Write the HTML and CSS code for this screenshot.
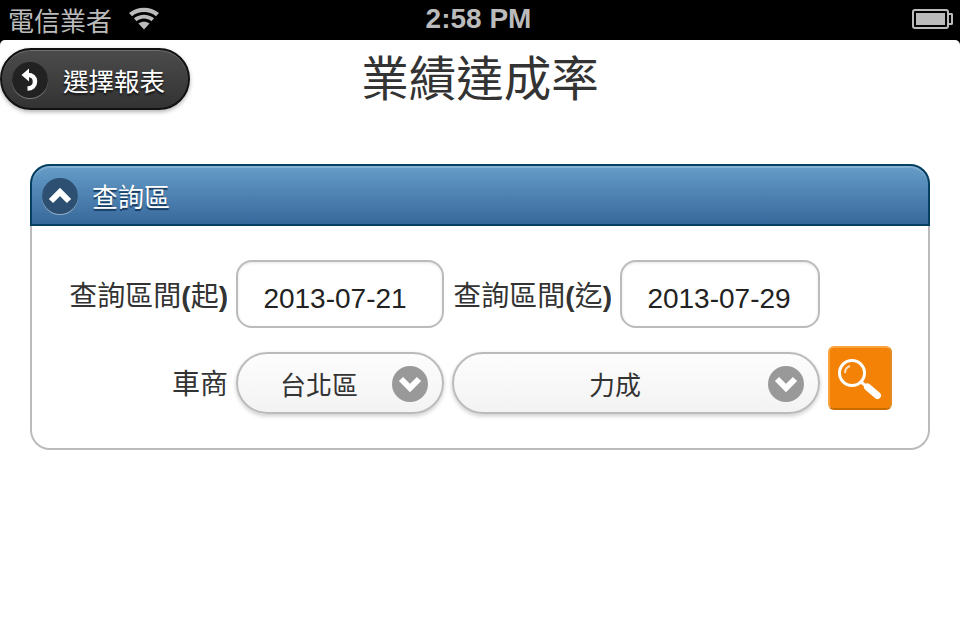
FILE: index.html
```html
<!DOCTYPE html>
<html lang="zh-Hant">
<head>
  <meta charset="utf8"/>
  <meta name="viewport" content="width=device-width"/>
  <title>業績達成率</title>
  <link rel="stylesheet" href="styles.css">
</head>
<body>
  <div class="statusbar">
    <div class="carrier">
      <span>電信業者</span>
      <svg class="wifi" width="32" height="24" viewBox="0 0 32 24">
        <path d="M16 23.500l-5.500-6c3.200-2.500 7.800-2.500 11 0z" fill="#bbb"/>
        <path d="M8.500 15.200c4.400-3.500 10.600-3.500 15 0l2.600-2.900c-5.900-4.700-14.300-4.700-20.200 0z" fill="#bbb"/>
        <path d="M4 10.300c7-5.600 17-5.600 24 0l3-3.300C22.200 0 9.800 0 1 7z" fill="#bbb"/>
      </svg>
    </div>
    <div class="clock">2:58 PM</div>
    <div class="status-right"><div class="battery"><div class="battery-level"></div></div></div>
  </div>

  <div class="page">
    <div class="header">
      <a class="btn-back">
        <span class="icon-disc">
          <svg width="22" height="26" viewBox="0 0 22 26">
            <path d="M10 1.500L2.500 8 10 14.500z" fill="#fff"/>
            <path d="M8 8h1c4 0 7 2.500 7 6.500s-3 7-7.500 7" fill="none" stroke="#fff" stroke-width="4.500"/>
          </svg>
        </span>
        <span class="btn-back-text">選擇報表</span>
      </a>
      <h1>業績達成率</h1>
    </div>

    <div class="panel">
      <div class="panel-head">
        <span class="icon-disc icon-disc-blue">
          <svg width="24" height="16" viewBox="0 0 24 16"><path d="M3 13l9-9 9 9" fill="none" stroke="#fff" stroke-width="6"/></svg>
        </span>
        <span>查詢區</span>
      </div>
      <div class="panel-body">
        <div class="row row-dates">
          <label class="lbl">查詢區間<b>(</b>起<b>)</b></label>
          <div class="field field-short">2013-07-21</div>
          <label class="lbl lbl-second">查詢區間<b>(</b>迄<b>)</b></label>
          <div class="field field-end">2013-07-29</div>
        </div>
        <div class="row row-select">
          <label class="lbl">車商</label>
          <div class="select select-short">
            <span class="select-text">台北區</span>
            <span class="chevron"><svg width="24" height="16" viewBox="0 0 24 16"><path d="M3 3l9 9 9-9" fill="none" stroke="#fff" stroke-width="6"/></svg></span>
          </div>
          <div class="select select-long">
            <span class="select-text">力成</span>
            <span class="chevron"><svg width="24" height="16" viewBox="0 0 24 16"><path d="M3 3l9 9 9-9" fill="none" stroke="#fff" stroke-width="6"/></svg></span>
          </div>
          <a class="btn-search">
            <svg width="50" height="50" viewBox="0 0 50 50">
              <circle cx="17" cy="20" r="12.500" fill="none" stroke="#fff" stroke-width="3"/>
              <path d="M10 20c0-3.500 2-6 5-7" fill="none" stroke="#fff" stroke-width="2" opacity=".75"/>
              <path d="M26 29l5 4" fill="none" stroke="#fff" stroke-width="3"/>
              <path d="M32.500 34l10 8.500" fill="none" stroke="#fff" stroke-width="7" stroke-linecap="round"/>
            </svg>
          </a>
        </div>
      </div>
    </div>
  </div>
</body>
</html>
```

FILE: styles.css
```css
html, body { margin: 0; height: 100%; overflow: hidden; }
body {
  background: #000; color: #333;
  font-family: "Liberation Sans", "Noto Sans CJK TC", sans-serif;
  font-size: 26px;
}

/* status bar */
.statusbar { height: 40px; display: flex; align-items: center; padding: 0 9px 0 8px; color: #bbb; }
.carrier { flex: 1; display: flex; align-items: center; gap: 16px; }
.carrier span { margin-top: -2px; }
.wifi { display: block; margin-top: -4px; }
.clock { font-weight: bold; font-size: 28px; margin-top: -3px; margin-left: -2px; }
.status-right { flex: 1; display: flex; justify-content: flex-end; }
.battery { width: 29px; height: 12px; border: 2px solid #bbb; border-radius: 3px; padding: 2px; margin-right: 2px; position: relative; margin-top: -2px; }
.battery:after { content: ""; position: absolute; right: -6px; top: 2px; width: 2px; height: 8px; border: 2px solid #bbb; border-left: 0; border-radius: 0 2px 2px 0; }
.battery-level { height: 100%; background: #bbb; }

/* page */
.page { height: 600px; background: #fff; border-radius: 5px 5px 0 0; padding: 8px 30px 0; box-sizing: border-box; }
.header { height: 62px; margin: 0 -30px; display: flex; justify-content: center; align-items: center; position: relative; }
h1 { margin: 2px 0 0; font-size: 47.500px; font-weight: 400; line-height: 62px; }
.btn-back {
  position: absolute; left: 0; top: 0; width: 190px; height: 62px; box-sizing: border-box;
  display: flex; align-items: center; gap: 15px; padding-left: 10px;
  background: linear-gradient(#4b4b4b, #333); border: 2px solid #111; border-radius: 31px;
  box-shadow: 0 2px 4px rgba(0,0,0,.3), inset 0 1px 0 rgba(255,255,255,.2);
  color: #fff; text-shadow: 0 2px 2px #111;
}
.btn-back-text { font-size: 25.500px; }
.icon-disc {
  width: 36px; height: 36px; border-radius: 50%; background: #222; margin-top: 2px;
  display: flex; align-items: center; justify-content: center;
  box-shadow: 0 1px 0 rgba(255,255,255,.35);
}

/* panel */
.panel { margin-top: 54px; height: 286px; box-sizing: border-box; border: 2px solid #bbb; border-top: 0; border-radius: 20px; }
.panel-head {
  height: 62px; margin: 0 -2px; box-sizing: border-box;
  display: flex; align-items: center; gap: 14px; padding-left: 10px;
  background: linear-gradient(#659dc8, #38689b); border: 2px solid #044062; border-radius: 20px 20px 0 0;
  box-shadow: inset 0 2px 0 rgba(255,255,255,.2);
  color: #fff; text-shadow: 0 2px 1px #14385c;
}
.icon-disc-blue { background: #2c4f72; box-shadow: 0 1px 0 rgba(255,255,255,.45); }
.panel-body { padding-top: 34px; }

/* form rows */
.row { display: flex; align-items: center; }
.row-dates { height: 68px; font-size: 28px; }
.row-select { margin-top: 22px; height: 64px; }
.lbl { width: 204px; font-size: 28px; text-align: right; padding-right: 8px; box-sizing: border-box; flex: none; }
.lbl b { font-weight: bold; }
.lbl-second { width: 176px; }
.field {
  height: 68px; box-sizing: border-box; border: 2px solid #bbb; border-radius: 16px; background: #fff;
  display: flex; align-items: center; justify-content: center; padding-top: 10px;
  box-shadow: inset 0 1px 3px rgba(0,0,0,.1); color: #222;
}
.field-short { width: 208px; padding-right: 10px; }
.field-end { width: 200px; padding-right: 2px; }
.select {
  height: 62px; box-sizing: border-box; border: 2px solid #bbb; border-radius: 31px;
  background: linear-gradient(#fdfdfd, #f3f3f3); box-shadow: 0 2px 4px rgba(0,0,0,.2);
  display: flex; align-items: center; position: relative; margin-top: 2px;
}
.select-short { width: 208px; }
.select-long { width: 368px; margin-left: 8px; }
.select-text { flex: 1; text-align: center; padding-right: 42px; }
.chevron {
  position: absolute; right: 14px; top: 12px; width: 36px; height: 36px; border-radius: 50%; background: #999;
  display: flex; align-items: center; justify-content: center;
}
.btn-search {
  width: 64px; height: 64px; margin-left: 8px; margin-top: -8px; box-sizing: border-box; border-radius: 6px;
  background: #f38206; border: 2px solid #f9a33f; border-bottom-color: #c96c00; border-right-color: #e38a20;
  display: flex; align-items: center; justify-content: center;
}
```
